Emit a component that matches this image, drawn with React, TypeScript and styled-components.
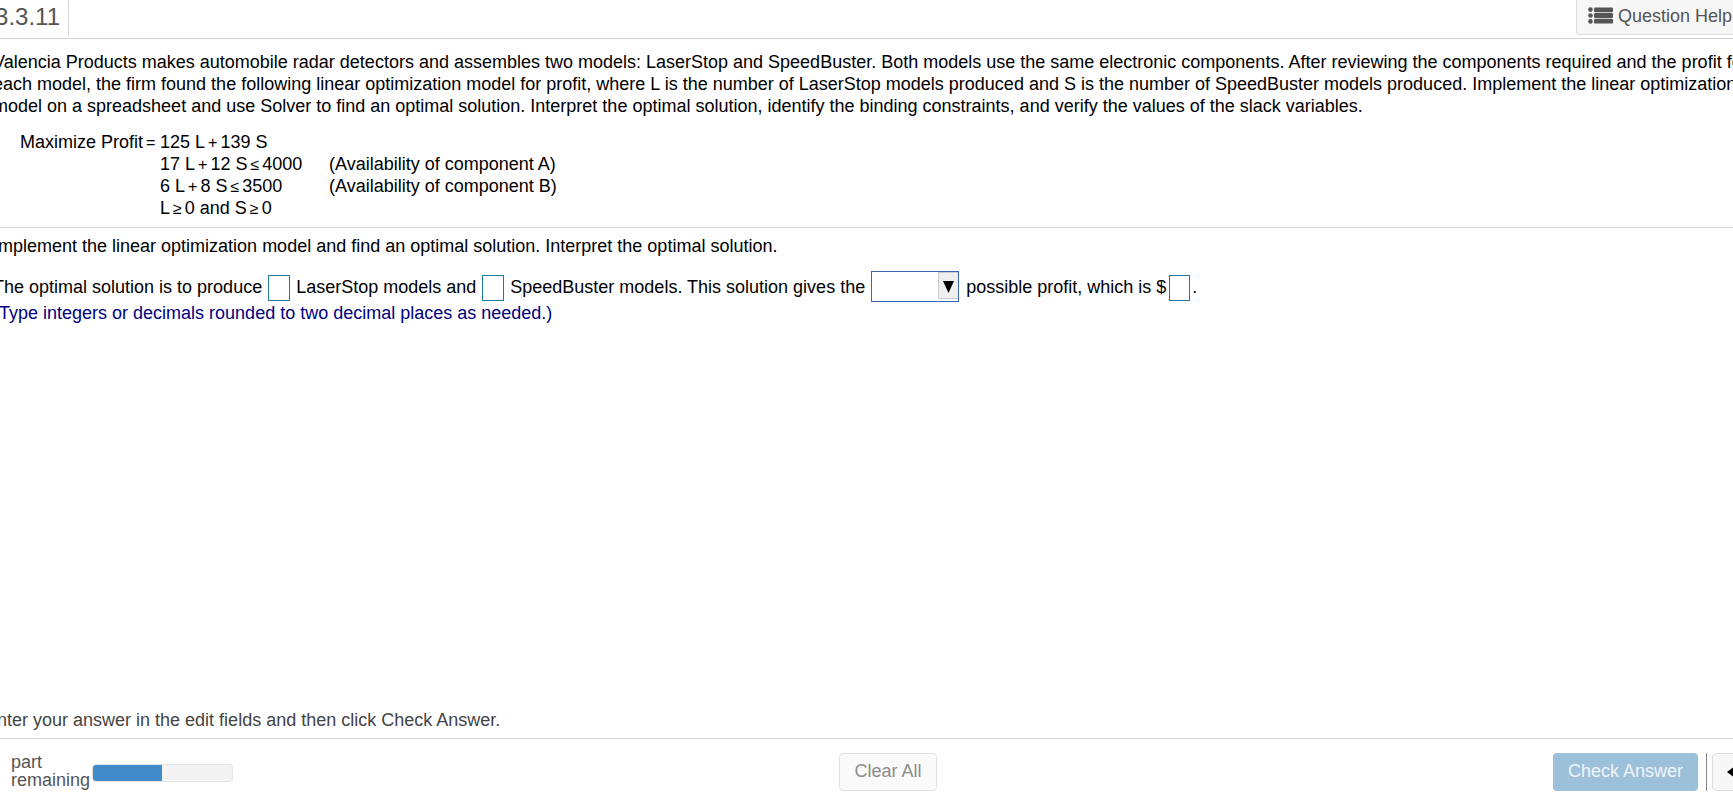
import React from "react";
import styled, { createGlobalStyle } from "styled-components";

const GlobalStyle = createGlobalStyle`
  html, body {
    margin: 0;
    padding: 0;
    height: 100%;
    overflow: hidden;
    background: #fff;
    font-family: "Liberation Sans", Arial, sans-serif;
  }
`;

const Page = styled.div`
  display: flex;
  flex-direction: column;
  width: 1790px;
  height: 805px;
  margin-left: -7px;
  color: #000;
  font-size: 18px;
  line-height: 22px;
`;

const Header = styled.header`
  display: flex;
  justify-content: space-between;
  height: 38px;
  border-bottom: 1px solid #cfd3e0;
  flex-shrink: 0;
`;

const Title = styled.div`
  width: 76px;
  height: 36px;
  box-sizing: border-box;
  border-right: 1px solid #d8d8d8;
  color: #555;
  font-size: 24px;
  line-height: 33px;
  text-align: right;
  padding-right: 8px;
`;

const HelpButton = styled.button`
  display: flex;
  align-items: center;
  gap: 5px;
  width: 207px;
  height: 35px;
  margin: 0;
  padding: 0 0 3px 11px;
  border: 1px solid #ddd;
  border-top: 0;
  border-radius: 0 0 0 4px;
  background: #f7f7f7;
  color: #555;
  font: inherit;
`;

const Content = styled.main`
  flex: 1;
  padding: 12px 0 0;
`;

const Intro = styled.p`
  margin: 0;
  white-space: nowrap;
`;

const MathTable = styled.div`
  display: grid;
  grid-template-columns: 140px 169px auto;
  justify-content: start;
  margin: 14px 0 0 27px;
  padding-bottom: 8px;
`;

const Label = styled.div`
  text-align: right;
  white-space: nowrap;
  padding-right: 2px;
`;

const Op = styled.span`
  margin: 0 3px;
  font-size: 16px;
  line-height: 1;
`;

const Divider = styled.hr`
  margin: 0;
  border: 0;
  border-top: 1px solid #d6d6d6;
`;

const Question = styled.p`
  margin: 7px 0 0;
`;

const Answer = styled.div`
  margin-top: 15px;
  height: 30px;
  display: flex;
  align-items: center;
  white-space: pre;
`;

const Hint = styled.div`
  color: #000080;
`;

const Field = styled.span`
  display: inline-block;
  box-sizing: border-box;
  width: 22px;
  height: 26px;
  margin: 2px 6px 0;
  border: 1px solid #1b7a9c;
  background: #fff;
`;

const DollarField = styled(Field)`
  width: 21px;
  margin: 2px 2px 0 3px;
`;

const Select = styled.span`
  display: flex;
  justify-content: flex-end;
  align-items: flex-start;
  flex-shrink: 0;
  box-sizing: border-box;
  width: 88px;
  height: 31px;
  margin: 0 7px 1px 6px;
  border: 1px solid #3a66b8;
  background: #fff;
`;

const SelectArrow = styled.span`
  display: flex;
  justify-content: center;
  padding-top: 8px;
  box-sizing: border-box;
  width: 20px;
  height: 27px;
  background: #efefef;
  border: 1px solid #ccc;
  border-right: 0;
`;

const Instruction = styled.div`
  color: #444;
  height: 29px;
  margin: 1px 0 0 -8px;
  flex-shrink: 0;
`;

const Footer = styled.footer`
  display: grid;
  grid-template-columns: 1fr auto 1fr;
  align-items: start;
  height: 67px;
  padding-top: 14px;
  box-sizing: border-box;
  border-top: 1px solid #cfd3e0;
  flex-shrink: 0;
`;

const Progress = styled.div`
  display: flex;
  align-items: flex-start;
  padding-left: 18px;
`;

const ProgressLabel = styled.div`
  color: #555;
  line-height: 18px;
  width: 81px;
`;

const Track = styled.div`
  width: 141px;
  height: 18px;
  margin-top: 11px;
  border-radius: 4px;
  background: #f3f3f3;
  border: 1px solid #e3e3e3;
  box-sizing: border-box;
  overflow: hidden;
`;

const Fill = styled.div`
  height: 100%;
  background: #428bca;
`;

const ClearButton = styled.button`
  width: 98px;
  height: 38px;
  padding: 0 0 2px;
  border: 1px solid #e2e2e2;
  border-radius: 4px;
  background: #fafafa;
  color: #8c8c8c;
  font: inherit;
`;

const Actions = styled.div`
  display: flex;
  justify-content: flex-end;
  align-items: stretch;
  height: 38px;
`;

const CheckButton = styled.button`
  width: 145px;
  padding: 0 0 2px;
  border: 0;
  border-radius: 4px;
  background: #9dc0da;
  color: #eef4f9;
  font: inherit;
`;

const Separator = styled.span`
  width: 1px;
  margin: 0 5px 0 8px;
  background: #888;
`;

const BackButton = styled.button`
  display: flex;
  align-items: center;
  width: 71px;
  padding: 0 0 0 14px;
  border: 1px solid #ddd;
  border-radius: 4px;
  background: #f7f7f7;
`;

const ListIcon = () => (
  <svg width="25" height="17" viewBox="0 0 25 17" fill="#555">
    <circle cx="2.5" cy="2.6" r="2.3" />
    <circle cx="2.5" cy="8.5" r="2.3" />
    <circle cx="2.5" cy="14.4" r="2.3" />
    <rect x="6" y="0.4" width="19" height="4.8" rx="1.2" />
    <rect x="6" y="6.1" width="19" height="4.8" rx="1.2" />
    <rect x="6" y="11.8" width="19" height="4.8" rx="1.2" />
  </svg>
);

const App = () => (
  <>
    <GlobalStyle />
    <Page>
      <Header>
        <Title>3.3.11</Title>
        <HelpButton>
          <ListIcon />
          Question Help
        </HelpButton>
      </Header>
      <Content>
        <Intro>
          Valencia Products makes automobile radar detectors and assembles two models: LaserStop and SpeedBuster. Both
          models use the same electronic components. After reviewing the components required and the profit for
          <br />
          each model, the firm found the following linear optimization model for profit, where L is the number of
          LaserStop models produced and S is the number of SpeedBuster models produced. Implement the linear optimization
          <br />
          model on a spreadsheet and use Solver to find an optimal solution. Interpret the optimal solution, identify the
          binding constraints, and verify the values of the slack variables.
        </Intro>
        <MathTable>
          <Label>
            Maximize Profit<Op>=</Op>
          </Label>
          <div>
            125 L<Op>+</Op>139 S
          </div>
          <div />
          <div />
          <div>
            17 L<Op>+</Op>12 S<Op>≤</Op>4000
          </div>
          <div>(Availability of component A)</div>
          <div />
          <div>
            6 L<Op>+</Op>8 S<Op>≤</Op>3500
          </div>
          <div>(Availability of component B)</div>
          <div />
          <div>
            L<Op>≥</Op>0 and S<Op>≥</Op>0
          </div>
          <div />
        </MathTable>
        <Divider />
        <Question>
          Implement the linear optimization model and find an optimal solution. Interpret the optimal solution.
        </Question>
        <Answer>
          The optimal solution is to produce
          <Field />
          LaserStop models and
          <Field />
          SpeedBuster models. This solution gives the
          <Select>
            <SelectArrow>
              <svg width="11" height="12" viewBox="0 0 11 12">
                <path d="M0 0 H11 L5.5 12 Z" fill="#000" />
              </svg>
            </SelectArrow>
          </Select>
          possible profit, which is $
          <DollarField />.
        </Answer>
        <Hint>(Type integers or decimals rounded to two decimal places as needed.)</Hint>
      </Content>
      <Instruction>Enter your answer in the edit fields and then click Check Answer.</Instruction>
      <Footer>
        <Progress>
          <ProgressLabel>
            part
            <br />
            remaining
          </ProgressLabel>
          <Track>
            <Fill style={{ width: `${(69 / 139) * 100}%` }} />
          </Track>
        </Progress>
        <ClearButton>Clear All</ClearButton>
        <Actions>
          <CheckButton>Check Answer</CheckButton>
          <Separator />
          <BackButton>
            <svg width="8" height="12" viewBox="0 0 8 12">
              <path d="M0 6 L8 0 V12 Z" fill="#000" />
            </svg>
          </BackButton>
        </Actions>
      </Footer>
    </Page>
  </>
);

export default App;
